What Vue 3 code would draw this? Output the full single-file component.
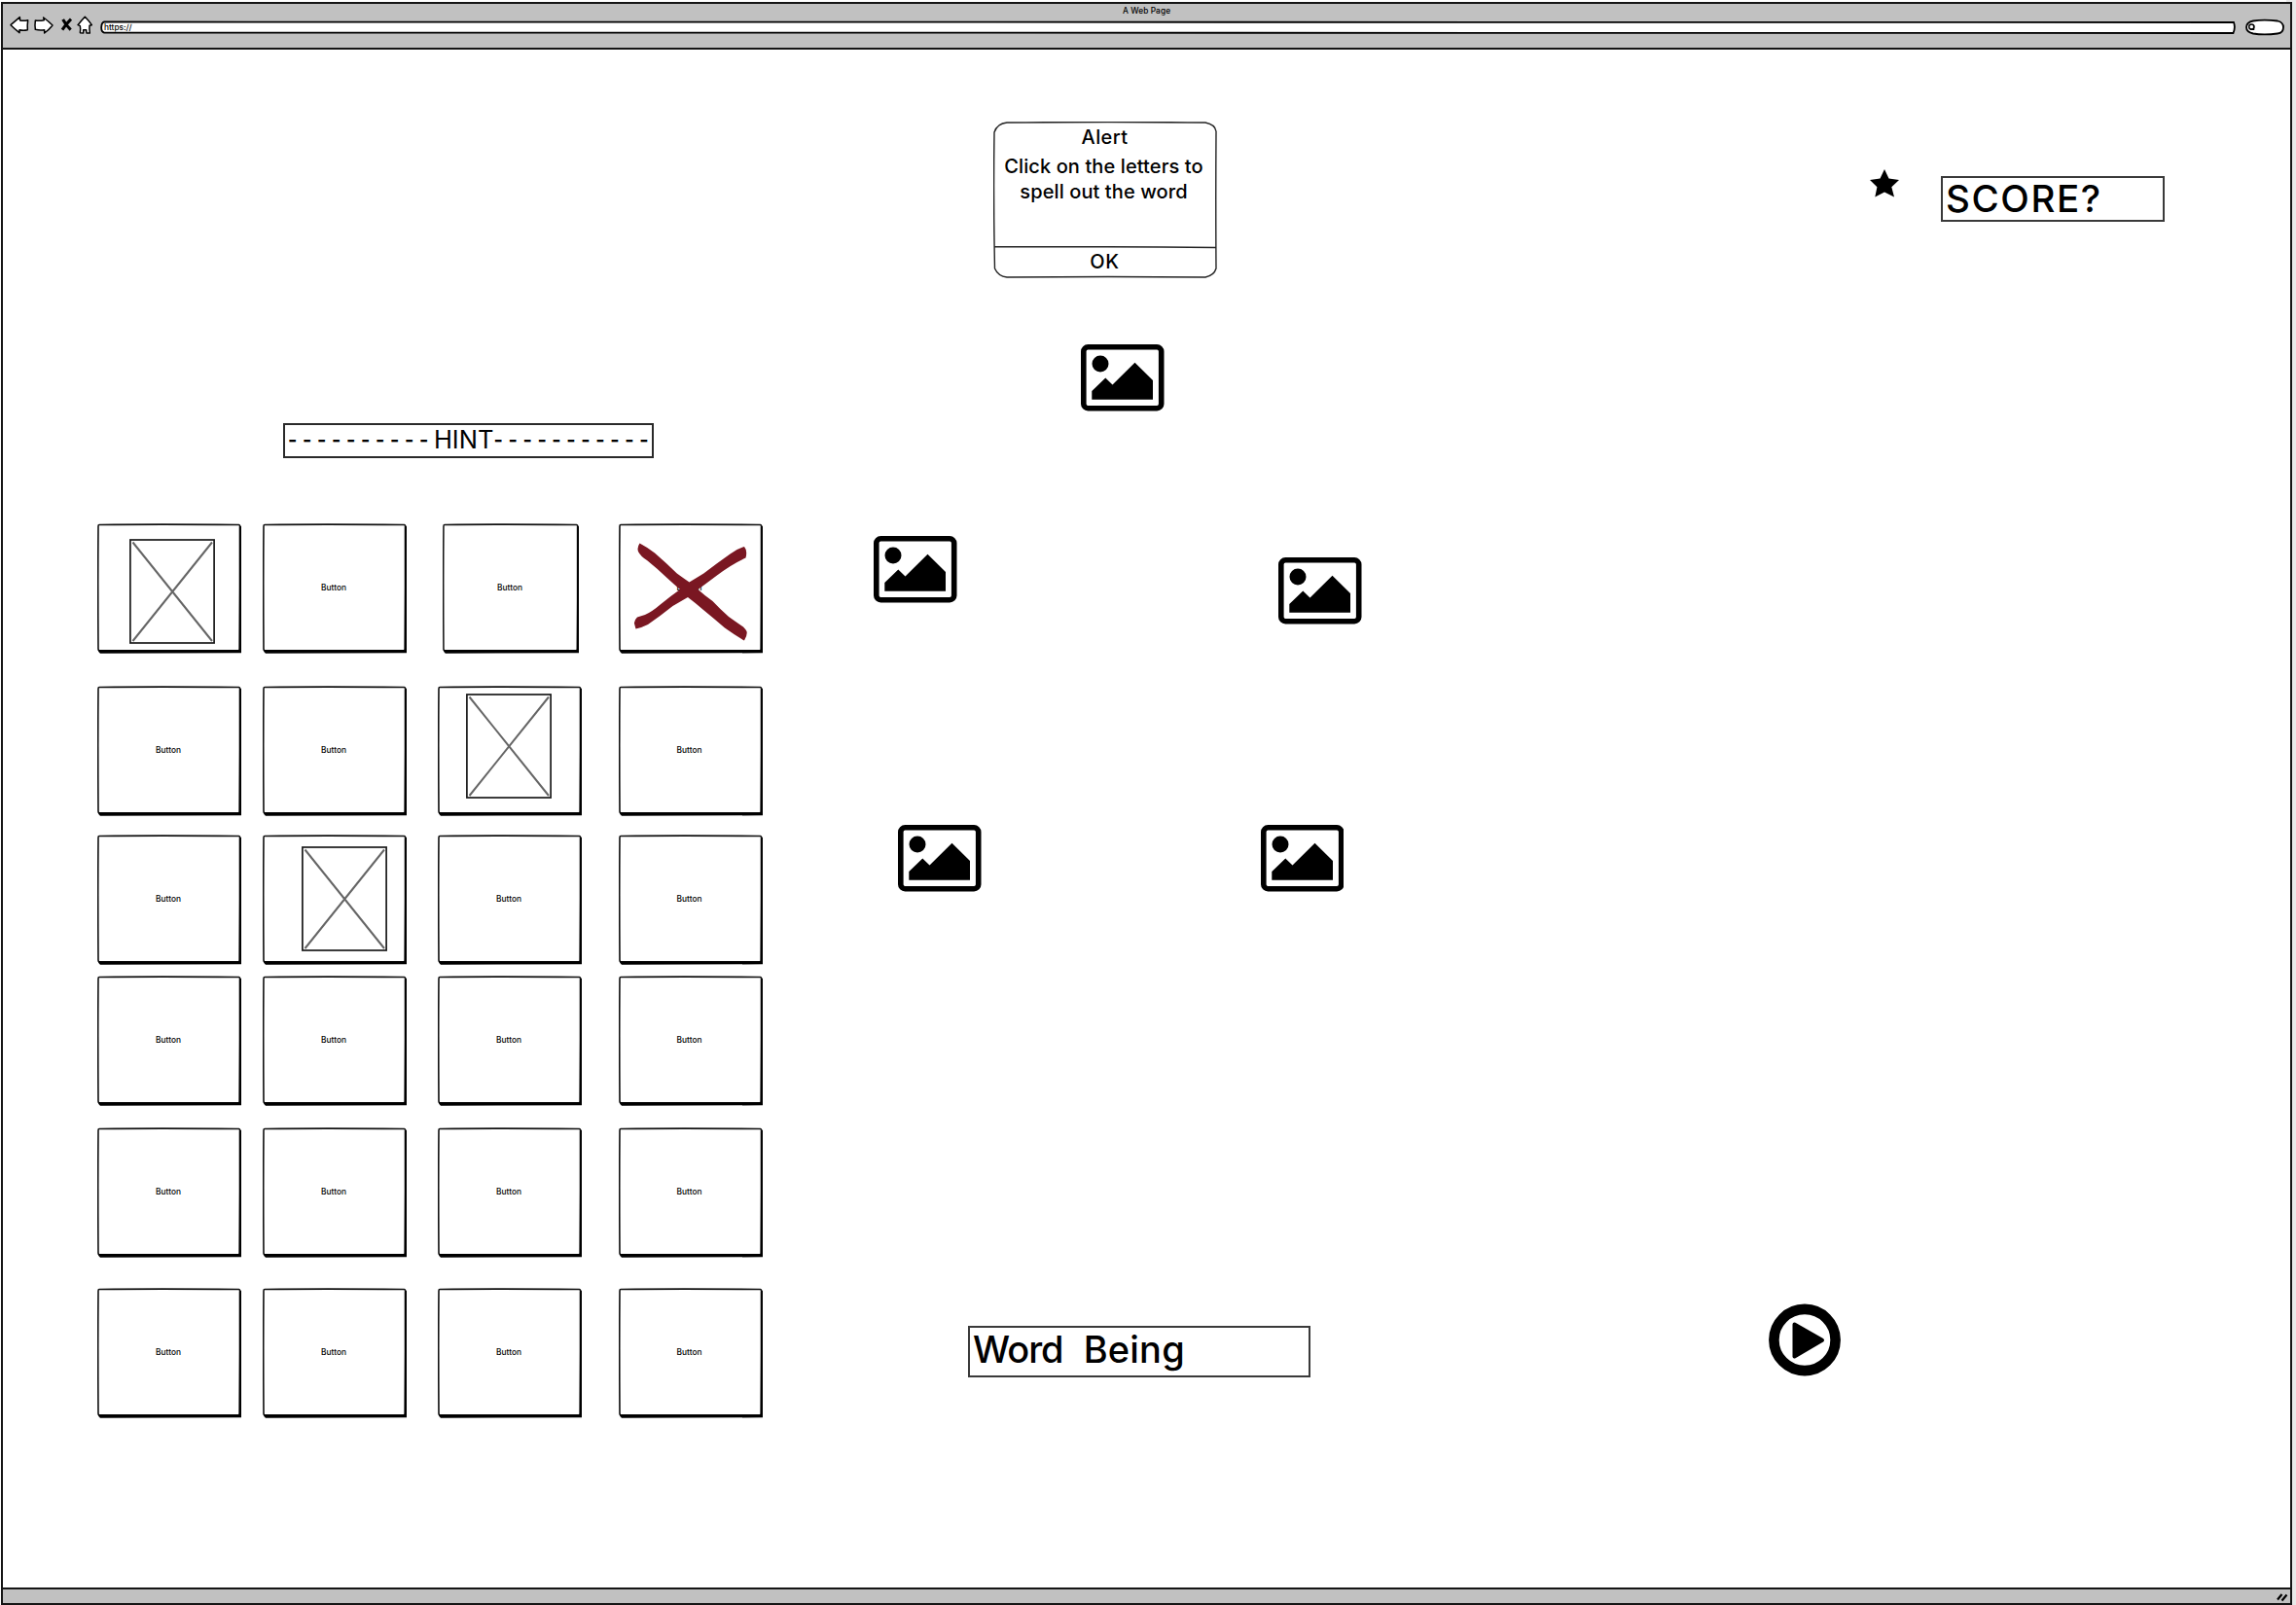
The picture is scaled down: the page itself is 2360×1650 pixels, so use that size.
<script setup>
// Each row lists its cells: plain button, picture placeholder (offset inside the cell) or crossed-out button
const placeholder = (x, y) => ({ kind: 'picture', x, y })
const button = { kind: 'button' }
const narrow = { kind: 'button', narrow: true }
const crossed = { kind: 'crossed' }

const cells = [
  placeholder(32.5, 16), button, narrow, crossed,
  button, button, placeholder(28.5, 8), button,
  button, placeholder(40, 12), button, button,
  button, button, button, button,
  button, button, button, button,
  button, button, button, button,
]

const pictures = [
  { x: 1111, y: 354 },
  { x: 898, y: 551 },
  { x: 1314, y: 573 },
  { x: 923, y: 848.2 },
  { x: 1295.5, y: 848.2 },
]

const dashesLeft = '- - - - - - - - - - '
const dashesRight = '- - - - - - - - - - -'
</script>

<template>
  <div class="page">
    <div class="browser">
      <header class="toolbar">
        <div class="title">A Web Page</div>
        <div class="controls">
          <svg class="nav" width="90" height="22" viewBox="24 45 270 66">
            <g fill="#fff" stroke="#000" stroke-width="4.5" stroke-linejoin="round">
              <path d="M33 77 L61 53 L62 63 Q74 65 86 62 Q84 77 85 92 Q72 95 60 92 L60 101 Q46 90 33 77 Z" />
              <path d="M109 63 Q122 65 136 62 L134 54 Q150 66 162 78 Q151 92 137 102 L137 92 Q122 94 109 91 Q107 77 109 63 Z" />
              <path d="M262 52 Q273 63 283 77 L276 79 Q275 90 277 102 L267 102 L266 92 L257 92 L257 102 L247 101 Q249 90 247 80 L240 77 Q250 65 262 52 Z" />
            </g>
            <path d="M194 60 Q203 77 218 92 M219 59 Q205 73 192 92" fill="none" stroke="#000" stroke-width="9" />
          </svg>
          <div class="address">
            <svg class="outline" viewBox="0 0 2195 14" width="2195" height="14">
              <path d="M4 1.5 Q1100 1 2193 2 Q2195 7 2192.500 13 Q1100 12 4 12.500 Q1 12 1.200 7 Q1.500 2 4 1.500 Z" fill="#fff" stroke="#000" stroke-width="1.800" />
            </svg>
            <span class="url">https://</span>
          </div>
          <svg class="search" width="42" height="18" viewBox="0 0 42 18">
            <path d="M9 2.500 Q20 .8 34 2.500 Q40 4 40 9 Q40 15 34 15.500 Q20 17.300 9 15.500 Q2 14 2 9 Q2 4 9 2.500 Z" fill="#fff" stroke="#000" stroke-width="1.800" />
            <circle cx="7.300" cy="8.500" r="2.600" fill="none" stroke="#000" stroke-width="1.500" />
            <path d="M6 11.300 H9.600 V7" fill="none" stroke="#000" stroke-width="1.300" />
          </svg>
        </div>
      </header>

      <main class="canvas">
        <section class="left">
          <div class="hint"><span class="dashes">{{ dashesLeft }}</span><span class="word">HINT</span><span class="dashes">{{ dashesRight }}</span></div>
          <div class="board">
            <div v-for="(cell, i) in cells" :key="i" class="cell" :class="{ narrow: cell.narrow }">
              <svg class="outline" width="100%" height="134" viewBox="0 0 148 134" preserveAspectRatio="none">
                <path d="M2 1.500 Q60 .8 145.500 1.500 Q147 2 146.500 4 L146.500 129.500 Q146 131 144 131 L3 131 Q1 131 1 129 Q.5 60 1 3 Q1 1.500 2 1.500 Z" fill="#fff" stroke="#111" stroke-width="1.600" />
                <path d="M146.500 2 L148.300 3.500 V133.300 L3 133.800 Q1 133 .8 130 H145.500 Z" fill="#000" />
              </svg>
              <span v-if="cell.kind !== 'picture'" class="label">Button</span>
              <svg v-if="cell.kind === 'picture'" class="placeholder" :style="{ left: cell.x + 'px', top: cell.y + 'px' }" width="88" height="108" viewBox="0 0 88 108">
                <rect x=".9" y="1" width="86.200" height="106" fill="#fff" stroke="#1a1a1a" stroke-width="1.700" />
                <path d="M3.500 3.500 L85 105 M85 3.500 L3.500 105" stroke="#666" stroke-width="2" />
              </svg>
              <svg v-if="cell.kind === 'crossed'" class="cross" width="148" height="133" viewBox="0 0 148 133">
                <path
                  fill="#7a1722"
                  d="M21.500 20.500 Q18.500 25 20 29 Q22.500 34 29 38 Q39 46 49.500 56 Q56 62 63 68 Q53 75 42.700 83.500 Q34 91 27 94 L19 96.500 Q15.500 100 16 103 L17.500 108.500 Q23 107.500 30 104 Q43 95 55.500 85 L71 76 Q79 82 87 89 Q98 98 109 107.500 Q118 114 129 120.500 Q132.500 115 131.500 111 Q130.500 109 128 106.500 Q120 101 113 96 Q104 88 96.500 80 Q88 74 81.500 68 Q91 61 101 53.500 Q116 42 130.500 35.500 Q132.500 28 129 24 Q122 26 114.500 31.500 Q101 41 87.300 51.500 Q80 56 72.500 60.500 Q66 56 59.800 51.500 Q48 40 37 30.500 Q30 25 21.500 20.500 Z"
                />
              </svg>
            </div>
          </div>
        </section>

        <section class="middle">
          <div class="alert">
            <svg class="outline" width="230" height="161" viewBox="0 0 230 161">
              <path d="M14 1 Q120 0 218 1 Q228 3 229 10 Q228.500 80 229 151 Q227 158 218 160 Q120 159 14 160 Q5 159 1.500 151 Q0 80 1 11 Q4 2 14 1 Z M1 128.500 Q120 128.500 229 129.500" fill="none" stroke="#222" stroke-width="1.400" />
            </svg>
            <div class="alert-title">Alert</div>
            <div class="alert-text">Click on the letters to<br />spell out the word</div>
            <div class="alert-ok">OK</div>
          </div>
          <div class="box word-box"><span class="w1">Word</span><span class="w2">Being</span></div>
        </section>

        <section class="right">
          <div class="score-row">
            <svg class="star" width="30" height="29" viewBox="0 0 30 29">
              <path d="M15 0 L19.500 9.500 L30 11 L22.300 18.300 L25 28.500 L15 23.500 L5.300 28.500 L7.400 18.300 L0 11 L10.500 9.500 Z" />
            </svg>
            <div class="box score">SCORE?</div>
          </div>
          <svg class="play" width="74" height="75" viewBox="0 0 74 75">
            <circle cx="37" cy="37.500" r="31.600" fill="#fff" stroke="#000" stroke-width="10.600" />
            <path d="M26.500 21.500 L55 37.700 L26.500 54.500 Z" stroke="#000" stroke-width="4" stroke-linejoin="round" />
          </svg>
        </section>

        <svg v-for="(p, i) in pictures" :key="'p' + i" class="picture" :style="{ left: p.x + 'px', top: p.y + 'px' }" width="85.500" height="68.500" viewBox="0 0 85.500 68.500">
          <rect x="2.800" y="2.800" width="79.900" height="62.900" rx="4.500" fill="#fff" stroke="#000" stroke-width="5.600" />
          <circle cx="20" cy="20" r="8.500" />
          <path d="M11.300 48 L25.300 34.500 L32.500 41.500 L55.500 18.800 L74 37 V56.700 H11.300 Z" />
        </svg>
      </main>

      <footer class="status">
        <svg width="12" height="10" viewBox="0 0 12 10">
          <path d="M1 7.500 L5.500 2 M5.500 8.500 L10.500 2.500" stroke="#000" stroke-width="2.200" />
        </svg>
      </footer>
    </div>
  </div>
</template>

<style>
body {
  margin: 0;
  background: #fff;
}
</style>

<style scoped>
.page {
  box-sizing: border-box;
  width: 2360px;
  height: 1650px;
  padding: 2px 4px 0 1px;
  background: linear-gradient(90deg, #fff 2350px, #e9e9e9 2350px);
  font-family: Inter, "Liberation Sans", sans-serif;
  color: #000;
  overflow: hidden;
}
.browser {
  position: relative;
  box-sizing: border-box;
  width: 2355px;
  height: 1648px;
  border: 2px solid #151515;
  background: #fff;
  display: flex;
  flex-direction: column;
}
.toolbar {
  box-sizing: border-box;
  height: 47px;
  flex: none;
  background: #c1c1c1;
  border-bottom: 2px solid #151515;
}
.title {
  height: 14px;
  line-height: 14px;
  font-size: 8.3px;
  font-weight: 500;
  letter-spacing: 0.1px;
  text-align: center;
}
.controls {
  display: flex;
}
.nav {
  margin: -3px 0 0 5px;
}
.address {
  position: relative;
  width: 2195px;
  height: 14px;
  margin: 3px 9px 0 5px;
}
.outline {
  position: absolute;
  left: 0;
  top: 0;
}
.url {
  position: relative;
  display: block;
  padding-left: 4px;
  line-height: 15px;
  font-size: 8.3px;
  font-weight: 500;
}
.search {
  margin-top: 1px;
}
.canvas {
  flex: 1;
  display: flex;
}
.left {
  width: 883px;
  padding-top: 384px;
}
.hint {
  box-sizing: border-box;
  width: 381px;
  height: 36px;
  margin-left: 288px;
  padding-left: 3px;
  border: 2px solid #2a2a2a;
  display: flex;
  line-height: 30px;
  font-size: 25.5px;
  font-weight: 500;
  white-space: pre;
}
.hint .dashes {
  font-size: 20px;
  font-weight: 700;
  letter-spacing: 0.45px;
}
.hint .word {
  font-weight: 400;
}
.board {
  margin: 67px 0 0 97px;
  display: grid;
  grid-template-columns: 170px 180px 185.5px 148px;
  grid-template-rows: 167px 153px 145px 156px 165px 134px;
}
.cell {
  position: relative;
  width: 148px;
  height: 134px;
  display: flex;
  align-items: center;
  justify-content: center;
}
.cell.narrow {
  width: 140px;
  margin-left: 5px;
}
.label {
  position: relative;
  font-size: 8.3px;
  font-weight: 500;
  line-height: 10px;
  left: -1px;
  top: -1px;
}
.placeholder {
  position: absolute;
}
.cross {
  position: absolute;
  left: 0;
  top: 0;
}
.middle {
  width: 534px;
  display: flex;
  flex-direction: column;
}
.alert {
  position: relative;
  width: 229px;
  height: 161px;
  margin: 74px 0 0 135px;
  text-align: center;
  font-size: 20px;
  font-weight: 500;
  letter-spacing: 0.1px;
}
.alert-title {
  padding-top: 3px;
  line-height: 26px;
  letter-spacing: 0.4px;
}
.alert-text {
  height: 98px;
  padding-top: 4px;
  margin-left: -2px;
  line-height: 26px;
  white-space: nowrap;
}
.alert-ok {
  line-height: 26px;
  letter-spacing: 0.8px;
}
.box {
  box-sizing: border-box;
  border: 2px solid #3a3a3a;
  white-space: nowrap;
}
.word-box {
  width: 352px;
  height: 53px;
  margin: 1077px 0 0 109px;
  padding-left: 3px;
  display: flex;
  gap: 21px;
  font-size: 38px;
  line-height: 45px;
  font-weight: 500;
}
.w1 {
  letter-spacing: -1px;
}
.w2 {
  letter-spacing: 0.2px;
}
.score-row {
  display: flex;
  margin: 123px 0 0 502px;
}
.star {
  margin-right: 43px;
}
.score {
  width: 230px;
  height: 47px;
  margin-top: 7px;
  padding-left: 3px;
  font-size: 38.5px;
  line-height: 42px;
  letter-spacing: 1.6px;
  font-weight: 500;
}
.play {
  display: block;
  margin: 1112px 0 0 398px;
}
.picture {
  position: absolute;
  margin: -4px 0 0 -3px;
}
.status {
  flex: none;
  box-sizing: border-box;
  height: 16px;
  background: #c1c1c1;
  border-top: 2px solid #151515;
  display: flex;
  justify-content: flex-end;
  padding: 3px 2px 0 0;
}
</style>
